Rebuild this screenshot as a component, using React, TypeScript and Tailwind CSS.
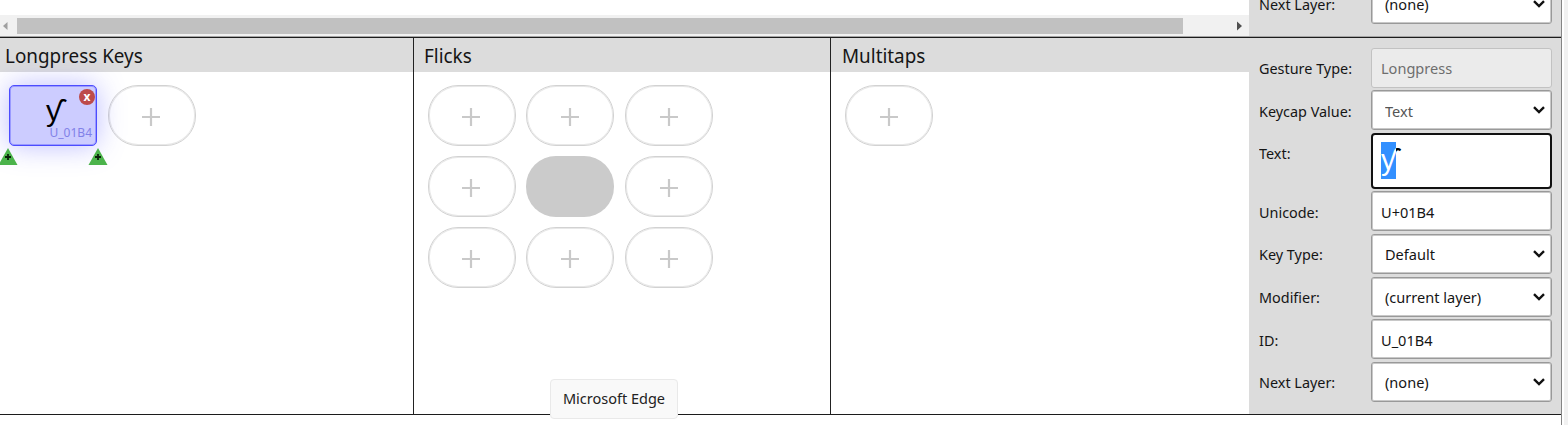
import React from "react";

function Chevron() {
  return (
    <svg className="h-[8px] w-[12px] shrink-0" viewBox="0 0 12 8" fill="none" stroke="#111" strokeWidth="2.4">
      <path d="M1 1.2 6 6 11 1.2" />
    </svg>
  );
}

type FieldProps = {
  label: string;
  value: string;
  valueClass?: string;
  select?: boolean;
  disabled?: boolean;
};

function Field({ label, value, valueClass = "", select, disabled }: FieldProps) {
  return (
    <div className="flex h-[40px] items-center">
      <span className="w-[112px] shrink-0 origin-left scale-x-[0.96] pt-[1px] whitespace-nowrap">{label}</span>
      <div
        className={`flex h-[40px] w-[181px] items-center justify-between rounded-[3px] border pr-[6px] ${
          select ? "pl-[13px]" : "pl-[9px]"
        } ${
          disabled
            ? "border-[#c2c2c2] bg-[#ebebeb] text-[#6e6e6e]"
            : "border-[#999999] bg-white shadow-[inset_0_0_0_1px_#c8c8c8]"
        }`}
      >
        <span className={`origin-left scale-x-[0.97] pt-[1px] whitespace-nowrap ${valueClass}`}>{value}</span>
        {select && <Chevron />}
      </div>
    </div>
  );
}

function AddKey() {
  return (
    <div className="flex h-[61px] w-[88px] items-center justify-center rounded-[30px] border border-[#d2d2d2] bg-white shadow-[inset_0_0_0_1px_#e8e8e8]">
      <svg className="mt-[2px] mr-[1px] h-[18px] w-[18px]" viewBox="0 0 18 18" stroke="#c9c9c9" strokeWidth="2.2">
        <path d="M0 9h18M9 0v18" />
      </svg>
    </div>
  );
}

function InsertMarker({ side }: { side: string }) {
  return (
    <svg className={`absolute top-[62px] h-[17px] w-[20px] ${side}`} viewBox="0 0 20 17">
      <path d="M10 0 19.5 17H.5z" fill="#4bb34b" />
      <path d="M7 9h6M10 6v6" stroke="#0a200a" strokeWidth="1.8" />
    </svg>
  );
}

function Heading({ children, className = "" }: { children: string; className?: string }) {
  return (
    <div className={`flex h-[33.5px] items-center bg-[#dcdcdc] pt-[1px] text-[20.5px] whitespace-nowrap ${className}`}>
      <span className="origin-left scale-x-[0.92]">{children}</span>
    </div>
  );
}

export default function App() {
  return (
    <div className="relative flex h-[425px] w-[1568px] overflow-hidden bg-white font-['Noto_Sans',sans-serif] text-[#151515]">
      <div className="flex w-[1561px] flex-col">
        <div className="flex h-[36px]">
          <div className="flex w-[1249px] flex-col justify-end">
            <div className="flex h-[21px] items-center bg-[#f1f1f1]">
              <svg className="h-[10px] w-[17px]" viewBox="0 0 17 10">
                <path d="M7.5 1v8L3 5z" fill="#a0a0a0" />
              </svg>
              <div className="h-[16px] w-[1166px] bg-[#c1c1c1]" />
              <svg className="ml-[53px] h-[10px] w-[8px]" viewBox="0 0 8 10">
                <path d="M1 .5v9L6 5z" fill="#505050" />
              </svg>
            </div>
          </div>
          <div className="flex w-[312px] flex-col justify-end overflow-hidden bg-[#dcdcdc] pb-[12px] pl-[10px] text-[15px]">
            <Field label="Next Layer:" value="(none)" select />
          </div>
        </div>
        <div className="h-[2px] border-b border-[#1c1c1c] bg-[#a5a5a5]" />
        <div className="flex h-[376px]">
          <div className="flex w-[1249px]">
            <div className="w-[414px] border-r-[1.5px] border-[#222]">
              <Heading className="pl-[5px]">Longpress Keys</Heading>
              <div className="flex gap-[10.5px] pt-[13.5px] pl-[9px]">
                <div className="relative h-[61px] w-[88px] rounded-[5px] border border-[#4c4cff] bg-[#ccccff] shadow-[inset_0_0_0_1px_#9a9aff,0_0_28px_rgba(90,90,255,0.4)]">
                  <span className="absolute top-0 left-[36px] font-['Liberation_Sans',sans-serif] text-[30px] leading-[50px] text-black">ƴ</span>
                  <span className="absolute right-[4px] bottom-[4px] text-[12px] leading-[16px] text-[#8181e8]">U_01B4</span>
                  <span className="absolute top-[3px] right-px flex h-[16px] w-[16px] items-center justify-center rounded-full bg-[#bd4a4a] pb-[1px] text-[12px] leading-none font-bold text-white">
                    x
                  </span>
                  <InsertMarker side="left-[-12px]" />
                  <InsertMarker side="left-[78px]" />
                </div>
                <AddKey />
              </div>
            </div>
            <div className="w-[417px] border-r-[1.5px] border-[#222]">
              <Heading className="pl-[10px]">Flicks</Heading>
              <div className="grid w-fit grid-cols-3 gap-x-[10.8px] gap-y-[10.2px] pt-[13.5px] pl-[13.5px]">
                {[0, 1, 2, 3, 4, 5, 6, 7, 8].map((i) =>
                  i === 4 ? <div key={i} className="h-[61px] w-[88px] rounded-[30px] bg-[#cbcbcb]" /> : <AddKey key={i} />,
                )}
              </div>
            </div>
            <div className="w-[418px]">
              <Heading className="pl-[11px]">Multitaps</Heading>
              <div className="pt-[13.5px] pl-[14px]">
                <AddKey />
              </div>
            </div>
          </div>
          <div className="flex w-[312px] flex-col gap-[2.6px] bg-[#dcdcdc] pt-[9.7px] pl-[10px] text-[15px]">
            <Field label="Gesture Type:" value="Longpress" disabled />
            <Field label="Keycap Value:" value="Text" valueClass="text-[#555]" select />
            <div className="flex h-[56px]">
              <span className="flex h-[40px] w-[112px] origin-left scale-x-[0.96] items-center">Text:</span>
              <div className="h-[56px] w-[181px] rounded-[4px] border-2 border-[#111] bg-white pt-[7px] pl-[8px]">
                <div className="relative h-[37px] w-[30px] font-['Liberation_Sans',sans-serif] text-[29px] leading-[37px] text-black">
                  <span className="absolute">ƴ</span>
                  <div className="absolute h-[37px] w-[15px] overflow-hidden bg-[#3390ff] text-white">ƴ</div>
                </div>
              </div>
            </div>
            <Field label="Unicode:" value="U+01B4" />
            <Field label="Key Type:" value="Default" select />
            <Field label="Modifier:" value="(current layer)" select />
            <Field label="ID:" value="U_01B4" />
            <Field label="Next Layer:" value="(none)" select />
          </div>
        </div>
        <div className="h-px bg-[#1c1c1c]" />
      </div>
      <div className="w-px bg-[#858585]" />
      <div className="w-[2px] bg-white" />
      <div className="flex-1 bg-[#f1f1f1]" />
      <div className="absolute top-[379px] left-[550px] flex h-[40px] w-[128px] items-center justify-center rounded-[4px] border border-[#e9e9e9] bg-[#f9f9f9] text-[14.5px] text-[#222]">
        Microsoft Edge
      </div>
    </div>
  );
}
